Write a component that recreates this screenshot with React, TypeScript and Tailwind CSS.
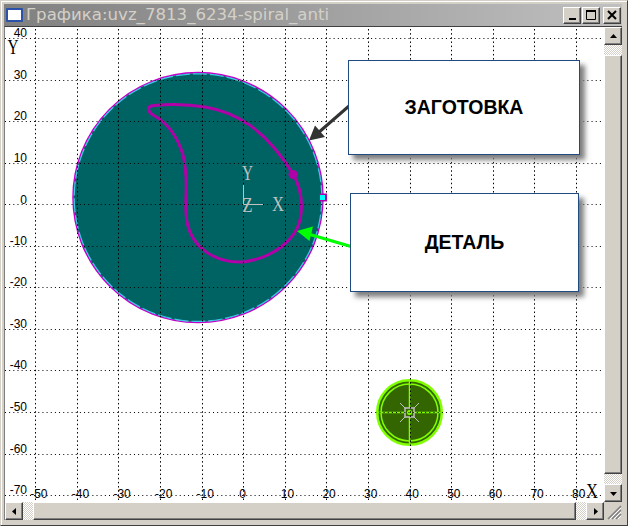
import React from "react";

const X0 = 243.2;
const Y0 = 204.2;
const SX = 4.16;
const SY = 4.155;

const xVals = [-50, -40, -30, -20, -10, 0, 10, 20, 30, 40, 50, 60, 70, 80];
const yVals = [40, 30, 20, 10, 0, -10, -20, -30, -40, -50, -60, -70];

const px = (v: number) => X0 + v * SX;
const py = (v: number) => Y0 - v * SY;

const raised =
  "border border-t-white border-l-white border-r-[#404040] border-b-[#404040] bg-[#d4d0c8] shadow-[inset_-1px_-1px_0_#808080]";
const checker =
  "bg-[repeating-conic-gradient(#ffffff_0_25%,#d4d0c8_0_50%)] bg-[length:2px_2px]";

function TitleButton({ className, children }: { className: string; children: React.ReactNode }) {
  return (
    <div className={`${raised} ${className} flex h-[17px] w-[18px] items-center justify-center`}>
      <svg width="14" height="13" viewBox="0 0 14 13">
        {children}
      </svg>
    </div>
  );
}

function ScrollButton({ points }: { points: string }) {
  return (
    <div className={`${raised} flex h-[18px] w-[18px] shrink-0 items-center justify-center`}>
      <svg width="9" height="9" viewBox="0 0 9 9">
        <polygon points={points} fill="#000000" />
      </svg>
    </div>
  );
}

function Drawing() {
  return (
    <svg
      width="599"
      height="475"
      viewBox="5 27 599 475"
      className="block"
      style={{ fontFamily: '"Liberation Sans", sans-serif' }}
    >
      {/* workpiece */}
      <circle cx="198" cy="197.6" r="124.6" fill="#006363" />
      <circle cx="198" cy="197.6" r="125" fill="none" stroke="#c000c8" strokeWidth="1.5" />
      <circle cx="198" cy="197.6" r="123.8" fill="none" stroke="#40c8e8" strokeWidth="1.2" strokeDasharray="14 3" />

      {/* part */}
      <path
        d="M151 106 C162 103.5 185 104 205 107 C235 112 265 128 293 174 C301 188 303 205 300 220 C296 238 275 258 243 262 C215 263 192 248 187 222 C183 200 190 185 183 155 C177 135 166 122 153 115 C148 112 147 107.5 151 106 Z"
        fill="none"
        stroke="#b000a8"
        strokeWidth="3"
      />

      {/* blank on the table */}
      <circle cx="409.5" cy="412.5" r="32.3" fill="#336600" stroke="#80ff00" strokeWidth="2.5" />
      <circle cx="409.5" cy="412.5" r="28.5" fill="none" stroke="#80ff00" strokeWidth="1.5" />
      <path d="M409.5 380.5V444.5M377.5 412.5H441.5" stroke="#80ff00" strokeWidth="1.5" />
      <path d="M400 403L419 422M419 403L400 422" stroke="#c0c0c0" strokeWidth="1" />
      <rect x="405" y="408" width="9" height="9" fill="#336600" stroke="#c0c0c0" strokeWidth="1.5" />
      <circle cx="409.5" cy="412.5" r="2.5" fill="#80ff00" />

      {/* grid */}
      {xVals.map((v) => (
        <line key={`x${v}`} x1={Math.round(px(v)) + 0.5} x2={Math.round(px(v)) + 0.5} y1="29" y2="502" stroke="#000000" strokeDasharray="1.5 2.655" />
      ))}
      {yVals.map((v) => (
        <line key={`y${v}`} x1="5" x2="604" y1={Math.round(py(v)) + 0.5} y2={Math.round(py(v)) + 0.5} stroke="#000000" strokeDasharray="1 3.16" />
      ))}

      {/* points of the part */}
      <circle cx="293" cy="174.5" r="4.5" fill="#b000a8" />
      <rect x="319" y="193.5" width="8" height="8" fill="#b000a8" />
      <rect x="320" y="195" width="5" height="5" fill="#00ffff" />

      {/* axis numbers */}
      {yVals.map((v) => (
        <text key={`ly${v}`} x="27" y={py(v) - (v === 0 ? 0 : 1)} textAnchor="end" fontSize="12" fill="#000000">
          {v < 0 ? `-${-v}` : v}
        </text>
      ))}
      {xVals.map((v) => (
        <text key={`lx${v}`} x={px(v) - (v < 0 ? 5 : 4)} y="498" fontSize="12" fill="#000000">
          {v < 0 ? `-${-v}` : v}
        </text>
      ))}

      {/* axis letters */}
      <g style={{ fontFamily: '"Liberation Serif", serif' }} fontSize="20">
        <text x="7.5" y="54" fill="#000000" textLength="11" lengthAdjust="spacingAndGlyphs">Y</text>
        <text x="586" y="498" fill="#000000" textLength="12" lengthAdjust="spacingAndGlyphs">X</text>
        <text x="242" y="180" fill="#c0c0c0" textLength="11" lengthAdjust="spacingAndGlyphs">Y</text>
        <text x="242.5" y="211.5" fill="#c0c0c0" textLength="10" lengthAdjust="spacingAndGlyphs">Z</text>
        <text x="272" y="211" fill="#c0c0c0" textLength="12" lengthAdjust="spacingAndGlyphs">X</text>
      </g>
      <path d="M243.5 185V204.5H263" fill="none" stroke="#c0c0c0" strokeWidth="1" />

      {/* callout arrows */}
      <line x1="349" y1="106" x2="318" y2="133" stroke="#333333" strokeWidth="3" />
      <polygon points="309,140.5 315,125.5 325,137" fill="#333333" />
      <line x1="351" y1="246.5" x2="310" y2="234.5" stroke="#00ff00" strokeWidth="3" />
      <polygon points="297,231 313,226.5 309.5,241" fill="#00ff00" />
    </svg>
  );
}

function Callout({ className, children }: { className: string; children: React.ReactNode }) {
  return (
    <div
      className={`absolute flex items-center justify-center border border-[#1f4a82] bg-white text-[19.5px] font-bold text-black shadow-[5px_5px_5px_#7f7f7f] ${className}`}
    >
      {children}
    </div>
  );
}

export default function App() {
  return (
    <div
      className="flex h-[526px] w-[628px] flex-col overflow-hidden border border-b-[#404040] border-l-[#d4d0c8] border-r-[#404040] border-t-[#d4d0c8] bg-[#d4d0c8] shadow-[inset_1px_1px_0_#ffffff] pb-[5px] pl-[3px] pr-[5px] pt-[3px]"
      style={{ fontFamily: '"Liberation Sans", sans-serif' }}
    >
      {/* title bar */}
      <div className="flex h-[22px] shrink-0 items-center bg-linear-to-r from-[#808080] to-[#c0c0c0] pl-[2px] pr-[1px]">
        <div className="h-[14px] w-[17px] shrink-0 rounded-[1px] border-2 border-[#2a52a8] bg-white" />
        <span
          className="ml-[3px] whitespace-nowrap text-[16.6px] leading-none text-[#d4d0c8]"
          style={{ fontFamily: '"DejaVu Sans", sans-serif' }}
        >
          Графика:uvz_7813_6234-spiral_anti
        </span>
        <div className="ml-auto flex items-center">
          <TitleButton className="mr-px">
            <rect x="4" y="9" width="7" height="2" fill="#000000" />
          </TitleButton>
          <TitleButton className="mr-[3px]">
            <path d="M2.5 2.5H11.5V10.5H2.5Z" fill="none" stroke="#000000" />
            <rect x="2" y="1" width="10" height="2" fill="#000000" />
          </TitleButton>
          <TitleButton className="">
            <path d="M3 2L11 10M11 2L3 10" stroke="#000000" strokeWidth="2" />
          </TitleButton>
        </div>
      </div>

      {/* client area */}
      <div className="flex min-h-0 flex-1 flex-col border-l border-t border-l-[#808080] border-t-[#404040]">
        <div className="flex min-h-0 flex-1">
          <div className="relative h-[475px] w-[599px] shrink-0 overflow-hidden bg-white">
            <Drawing />
            <Callout className="left-[343px] top-[33px] h-[95px] w-[232px]">ЗАГОТОВКА</Callout>
            <Callout className="left-[345px] top-[166px] h-[99px] w-[229px]">ДЕТАЛЬ</Callout>
          </div>
          <div className="flex w-[18px] shrink-0 flex-col">
            <ScrollButton points="4.5,2 8,6 1,6" />
            <div className={`h-[10px] shrink-0 ${checker}`} />
            <div className={`${raised} flex-1`} />
            <div className={`h-[10px] shrink-0 ${checker}`} />
            <ScrollButton points="1,3 8,3 4.5,7" />
          </div>
        </div>
        <div className="flex h-[18px] shrink-0">
          <ScrollButton points="6,1 6,8 2,4.5" />
          <div className={`w-[10px] shrink-0 ${checker}`} />
          <div className={`${raised} flex-1`} />
          <div className={`w-[10px] shrink-0 ${checker}`} />
          <ScrollButton points="3,1 3,8 7,4.5" />
          <div className="flex w-[18px] shrink-0 items-end justify-end">
            <svg width="15" height="15" viewBox="0 0 15 15">
              <path d="M14 1L1 14M14 5L5 14M14 9L9 14" stroke="#808080" strokeWidth="1.5" fill="none" />
              <path d="M14 3L3 14M14 7L7 14M14 11L11 14" stroke="#ffffff" strokeWidth="1" fill="none" />
            </svg>
          </div>
        </div>
      </div>
    </div>
  );
}
